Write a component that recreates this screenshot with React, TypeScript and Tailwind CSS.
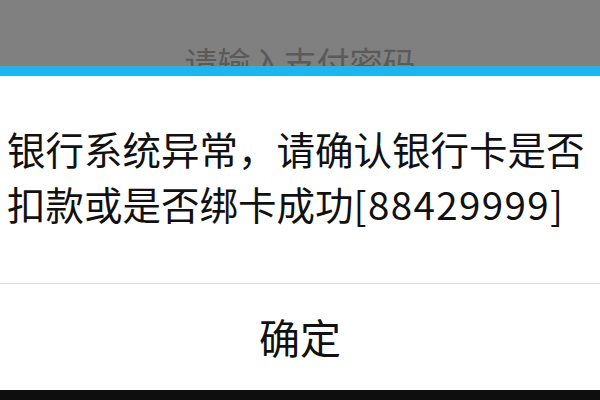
export default function App() {
  const font = { fontFamily: '"Noto Sans CJK SC", "Noto Sans", sans-serif' };
  return (
    <div className="w-[600px] h-[400px] flex flex-col overflow-hidden bg-white" style={font}>
      <div className="h-[66px] shrink-0 bg-[#808080] overflow-hidden flex justify-center">
        <div className="pt-[42px] text-[33px] leading-[40px] text-[#5a5a5a]">请输入支付密码</div>
      </div>
      <div className="h-[10px] shrink-0 bg-[#1fb5ec]" />
      <div className="h-[207px] shrink-0 pt-[45px] px-[7px] text-[38.5px] leading-[55px] text-[#111]">
        <div className="whitespace-nowrap">银行系统异常，请确认银行卡是否</div>
        <div className="whitespace-nowrap">
          扣款或是否绑卡成功<span className="tracking-[1.4px]">[88429999]</span>
        </div>
      </div>
      <div className="h-[1px] shrink-0 bg-[#dcdcdc]" />
      <div className="flex-1 flex items-center justify-center text-[41px] text-[#111]">确定</div>
      <div className="h-[10px] shrink-0 bg-[#0e0e0e]" />
    </div>
  );
}
